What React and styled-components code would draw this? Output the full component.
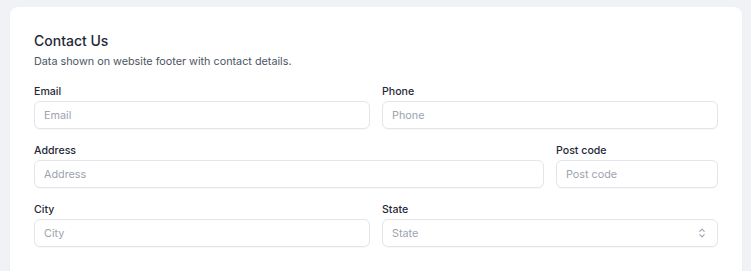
import React from "react";
import styled, { createGlobalStyle } from "styled-components";

const Global = createGlobalStyle`
  html, body { margin: 0; padding: 0; }
  body {
    background: #f1f2f6;
    font-family: Inter, "Noto Sans", sans-serif;
    -webkit-font-smoothing: antialiased;
  }
`;

const Page = styled.div`
  padding: 7px 9px 0 10px;
`;

const Card = styled.section`
  background: #ffffff;
  border-radius: 8px;
  box-shadow: 0 1px 2px rgba(16, 24, 40, 0.06);
  padding: 24px 24px 40px;
`;

const Title = styled.h2`
  margin: 0;
  font-size: 14px;
  line-height: 20px;
  font-weight: 500;
  color: #1f2937;
`;

const Subtitle = styled.p`
  margin: 3px 0 0;
  font-size: 10.8px;
  line-height: 16px;
  color: #4b5563;
`;

const Grid = styled.div`
  margin-top: 11px;
  display: grid;
  grid-template-columns: repeat(4, 1fr);
  column-gap: 12px;
  row-gap: 11px;
`;

const Field = styled.label`
  grid-column: span ${(p) => p.$span};
  display: flex;
  flex-direction: column;
`;

const LabelText = styled.span`
  padding-top: 2px;
  font-size: 10.6px;
  line-height: 18px;
  font-weight: 500;
  color: #1f2937;
`;

const Input = styled.input`
  box-sizing: border-box;
  height: 28px;
  width: 100%;
  border: 1px solid #e3e5ea;
  border-radius: 6px;
  padding: 0 9px;
  font-family: inherit;
  font-size: 10.8px;
  color: #111827;
  background: #fff;
  box-shadow: 0 1px 1px rgba(16, 24, 40, 0.03);
  outline: none;
  &::placeholder { color: #9ca3af; }
`;

const SelectBox = styled.div`
  box-sizing: border-box;
  height: 28px;
  border: 1px solid #e3e5ea;
  border-radius: 6px;
  padding: 0 10px 0 9px;
  display: flex;
  align-items: center;
  justify-content: space-between;
  font-size: 10.8px;
  color: #9ca3af;
  background: #fff;
  box-shadow: 0 1px 1px rgba(16, 24, 40, 0.03);
`;

const Chevrons = () => (
  <svg width="10" height="12" viewBox="0 0 10 12" fill="none" stroke="#9ca3af" strokeWidth="1.1" strokeLinecap="round" strokeLinejoin="round">
    <path d="M2.8 4.3 L5 2.1 L7.2 4.3" />
    <path d="M2.8 7.7 L5 9.9 L7.2 7.7" />
  </svg>
);

export default function App() {
  return (
    <>
      <Global />
      <Page>
        <Card>
          <Title>Contact Us</Title>
          <Subtitle>Data shown on website footer with contact details.</Subtitle>
          <Grid>
            <Field $span={2}>
              <LabelText>Email</LabelText>
              <Input placeholder="Email" />
            </Field>
            <Field $span={2}>
              <LabelText>Phone</LabelText>
              <Input placeholder="Phone" />
            </Field>
            <Field $span={3}>
              <LabelText>Address</LabelText>
              <Input placeholder="Address" />
            </Field>
            <Field $span={1}>
              <LabelText>Post code</LabelText>
              <Input placeholder="Post code" />
            </Field>
            <Field $span={2}>
              <LabelText>City</LabelText>
              <Input placeholder="City" />
            </Field>
            <Field $span={2}>
              <LabelText>State</LabelText>
              <SelectBox>
                <span>State</span>
                <Chevrons />
              </SelectBox>
            </Field>
          </Grid>
        </Card>
      </Page>
    </>
  );
}
